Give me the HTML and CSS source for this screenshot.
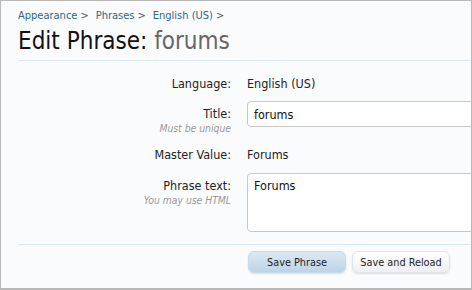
FILE: index.html
```html
<!DOCTYPE html>
<html>
<head>
<meta charset="utf-8">
<link rel="stylesheet" href="styles.css">
</head>
<body>
<div class="frame">
  <nav class="crumbs">
    <a>Appearance</a><span class="sep">&gt;</span>
    <a>Phrases</a><span class="sep">&gt;</span>
    <a>English (US)</a><span class="sep">&gt;</span>
  </nav>
  <h1 class="title">Edit Phrase: <em>forums</em></h1>
  <form class="form">
    <div class="row row-lang">
      <div class="label">Language:</div>
      <div class="value">English (US)</div>
    </div>
    <div class="row row-input row-title">
      <div class="label">Title:<span class="hint">Must be unique</span></div>
      <div class="value"><input class="field" type="text" value="forums"></div>
    </div>
    <div class="row row-master">
      <div class="label">Master Value:</div>
      <div class="value">Forums</div>
    </div>
    <div class="row row-input row-phrase">
      <div class="label">Phrase text:<span class="hint">You may use HTML</span></div>
      <div class="value"><textarea class="field area">Forums</textarea></div>
    </div>
    <div class="buttons">
      <button type="button" class="btn primary">Save Phrase</button>
      <button type="button" class="btn">Save and Reload</button>
    </div>
  </form>
</div>
</body>
</html>
```
FILE: styles.css
```css
html, body {
  margin: 0;
  padding: 0;
}
body {
  font-family: "DejaVu Sans Condensed", "DejaVu Sans", sans-serif;
  color: #222;
}
.frame {
  box-sizing: border-box;
  width: 472px;
  height: 290px;
  border: 1px solid #b8b8b8;
  border-bottom-width: 2px;
  background: #fafbfd;
  padding-left: 17px;
  overflow: hidden;
}
.crumbs {
  font-size: 11px;
  padding-top: 8px;
  height: 13px;
  line-height: 13px;
  display: flex;
  white-space: nowrap;
}
.crumbs a {
  color: #2f6584;
}
.crumbs .sep {
  color: #555;
  margin-left: 3px;
  margin-right: 7px;
}
.title {
  margin: 0;
  font-weight: normal;
  font-size: 24px;
  line-height: 30px;
  padding-top: 4px;
  height: 34px;
  color: #111;
  border-bottom: 1px solid #d9e7f0;
}
.title em {
  font-style: normal;
  color: #666;
}
.form {
  font-size: 12.5px;
}
.row {
  display: grid;
  grid-template-columns: 213px 1fr;
  column-gap: 16px;
  line-height: 16px;
}
.label {
  text-align: right;
  color: #222;
}
.hint {
  display: block;
  font-size: 10.3px;
  font-style: italic;
  color: #999;
  line-height: 12px;
}
.row-lang {
  padding-top: 15px;
}
.row-title {
  padding-top: 9px;
}
.row-master {
  padding-top: 13px;
}
.row-phrase {
  padding-top: 10px;
}
.row-input .label {
  padding-top: 5px;
}
.field {
  box-sizing: border-box;
  display: block;
  width: 260px;
  height: 26px;
  border: 1px solid #c8c8c8;
  border-radius: 4px;
  background: #fff;
  font-family: inherit;
  font-size: 12.5px;
  color: #111;
  padding: 3px 6px;
  margin: 0;
}
.area {
  height: 59px;
  resize: none;
  line-height: 16px;
  padding-top: 4px;
  overflow: hidden;
}
.buttons {
  margin-top: 12px;
  border-top: 1px solid #d9e7f0;
  padding-top: 6px;
  padding-left: 230px;
  display: flex;
  gap: 6px;
}
.btn {
  font-family: inherit;
  font-size: 10.8px;
  color: #222;
  height: 22px;
  padding: 0;
  border: 1px solid #dfe3e8;
  border-radius: 6px;
  background: linear-gradient(#ffffff, #eef0f3);
  box-shadow: 0 1px 2px rgba(0,0,0,0.12);
  width: 98px;
}
.btn.primary {
  background: linear-gradient(#dde9f3, #bcd4e7);
  border-color: #c8d9e6;
}
```
